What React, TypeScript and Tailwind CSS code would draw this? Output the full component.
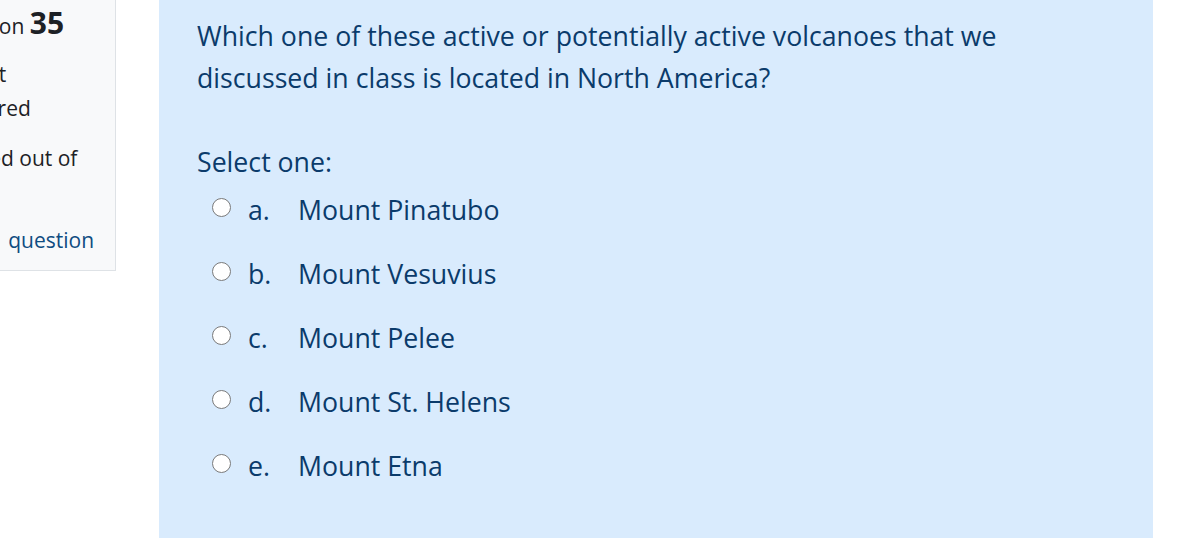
const options = [
  { letter: "a.", text: "Mount Pinatubo" },
  { letter: "b.", text: "Mount Vesuvius" },
  { letter: "c.", text: "Mount Pelee" },
  { letter: "d.", text: "Mount St. Helens" },
  { letter: "e.", text: "Mount Etna" },
];

const Radio = () => (
  <span className="flex h-[19px] w-[19px] shrink-0 rounded-full border-[1.5px] border-[#7a7a7a] bg-white" />
);

export default function App() {
  return (
    <div
      className="flex h-[541px] w-full items-start overflow-hidden bg-white"
      style={{ fontFamily: '"Open Sans", "Noto Sans", sans-serif' }}
    >
      {/* question info box, cut off on the left */}
      <div className="ml-[-76px] h-[271px] w-[192px] shrink-0 border border-t-0 border-[#dee2e6] bg-[#f8f9fa] px-[10px] pt-[6px] text-[21px] leading-[34px] text-[#1d2125]">
        <div className="whitespace-nowrap">
          Question <span className="text-[30px] font-bold">35</span>
        </div>
        <div className="mt-[14px] whitespace-nowrap">Not yet</div>
        <div className="whitespace-nowrap">answered</div>
        <div className="ml-[4px] mt-[16px] whitespace-nowrap">Marked out of</div>
        <div className="ml-[4px] whitespace-nowrap">1.00</div>
        <div className="mt-[14px] whitespace-nowrap pl-[20px] text-[#0f4c81]">
          Flag<span className="ml-[14px]">question</span>
        </div>
      </div>

      <div className="ml-[43px] h-[538px] w-[994px] shrink-0 bg-[#d9ebfd] pl-[38px] pt-[15px] text-[26.7px] leading-[42px] text-[#0b3b6b]">
        <p>
          Which one of these active or potentially active volcanoes that we
          <br />
          discussed in class is located in North America?
        </p>
        <p className="mt-[42px]">Select one:</p>
        <div className="mt-[6px] flex flex-col gap-[22px]">
          {options.map((o) => (
            <label key={o.letter} className="flex items-center">
              <span className="ml-[15px] mt-[-6px]">
                <Radio />
              </span>
              <span className="ml-[17px] w-[50px]">{o.letter}</span>
              <span>{o.text}</span>
            </label>
          ))}
        </div>
      </div>
    </div>
  );
}
